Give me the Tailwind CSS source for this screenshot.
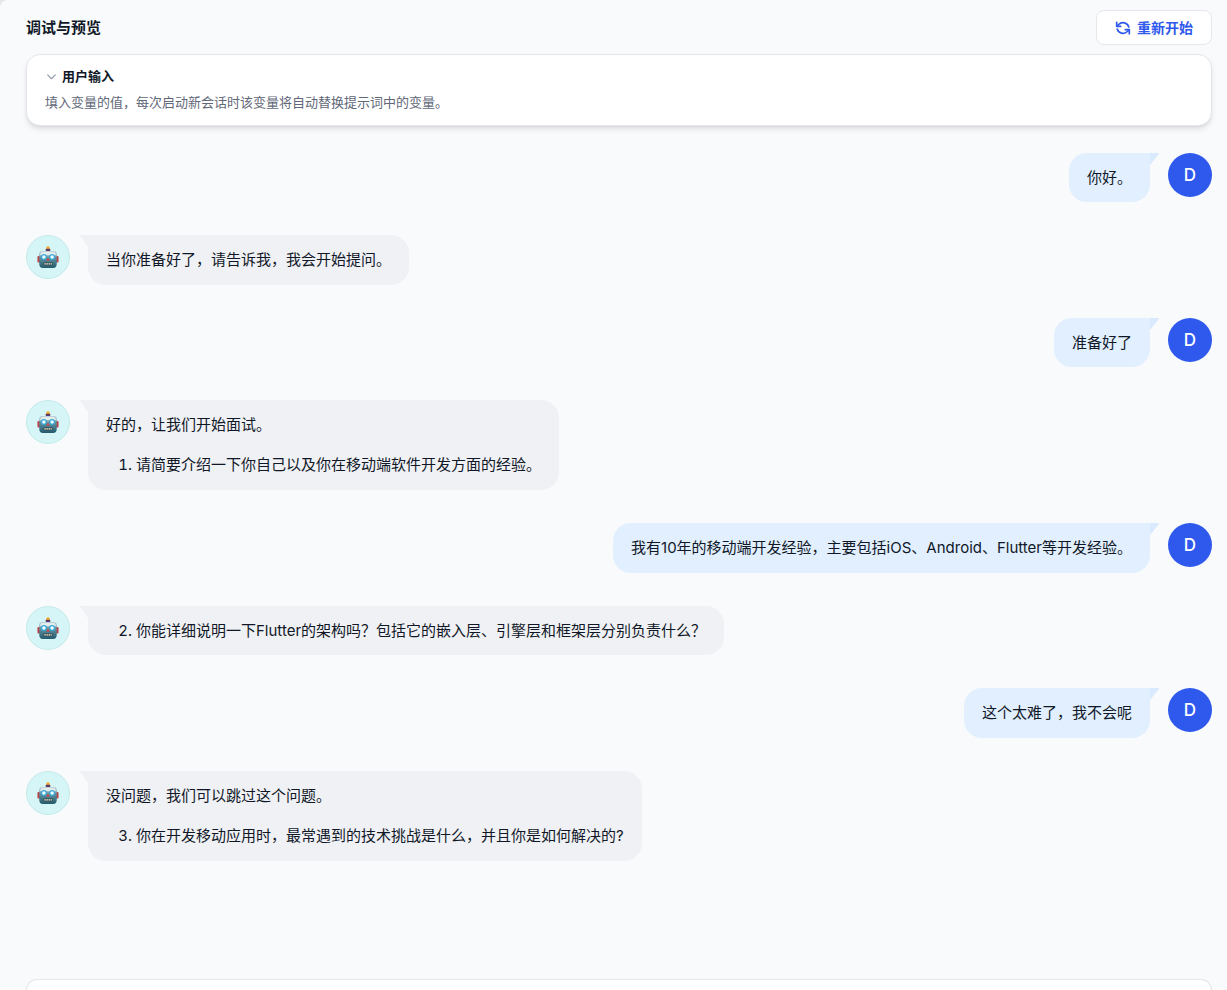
<!DOCTYPE html>
<html lang="zh-CN">

<head>
	<meta charset="UTF-8">
	<meta name="viewport" content="width=device-width, initial-scale=1.0">
	<title>调试与预览</title>
	<script src="https://cdn.jsdelivr.net/npm/@tailwindcss/browser@4"></script>
</head>

<body class="bg-gray-200 font-['Inter','Noto_Sans_CJK_SC',sans-serif] text-[#101828]">
	<!-- shared shapes -->
	<svg class="absolute size-0" aria-hidden="true">
		<defs>
			<linearGradient id="face" x1="0" y1="0" x2="0" y2="1">
				<stop offset="0" stop-color="#b9cdd3" />
				<stop offset=".45" stop-color="#5b8c9b" />
				<stop offset="1" stop-color="#235a6d" />
			</linearGradient>
		</defs>
		<symbol id="robot" viewBox="0 0 24 24">
			<rect x=".5" y="11" width="4" height="7" rx="1.2" fill="#b8434a" />
			<rect x="19.5" y="11" width="4" height="7" rx="1.2" fill="#b8434a" />
			<path d="M10 4V2.200a2 2 0 0 1 4 0V4z" fill="#f3ad2e" />
			<rect x="9.6" y="3" width="4.8" height="2.600" rx=".6" fill="#5b3b66" />
			<path d="M2.500 9A3.500 3.500 0 0 1 6 5.500h12A3.500 3.500 0 0 1 21.500 9v11a4 4 0 0 1-4 4h-11a4 4 0 0 1-4-4z" fill="url(#face)" />
			<path d="M3.500 10V9A3 3 0 0 1 6.500 6.200h11a3 3 0 0 1 3 2.800v1z" fill="#e3ecec" />
			<circle cx="7.500" cy="12" r="3.200" fill="#36a9d4" />
			<circle cx="16.500" cy="12" r="3.200" fill="#36a9d4" />
			<circle cx="7.500" cy="12" r="1.900" fill="#f2fdff" />
			<circle cx="16.500" cy="12" r="1.900" fill="#f2fdff" />
			<path d="M12 12.500l1.800 3.300h-3.600z" fill="#df3f3f" />
			<rect x="7" y="18" width="10" height="3" rx="1" fill="#27424d" />
			<path d="M8 18.500h1.500v2H8zM10.300 18.500h1.500v2h-1.500zM12.600 18.500h1.500v2h-1.500zM14.800 18.500h1.300v2h-1.300z" fill="#d8cfb4" />
		</symbol>
		<symbol id="tail" viewBox="0 0 8 12" preserveAspectRatio="none">
			<path d="M1 0h7v12L.3 1.300C-.1.700.3 0 1 0z" fill="currentColor" />
		</symbol>
	</svg>

	<main class="flex min-h-screen flex-col rounded-tl-lg bg-[#f8fafc] pr-[15px] pl-[26px]">
		<header class="flex items-center justify-between pt-[10px] pb-[9px]">
			<h1 class="text-[15px] font-semibold leading-6">调试与预览</h1>
			<button class="flex h-[35px] items-center gap-[6px] rounded-lg border border-gray-200 bg-white px-[18px] text-sm font-semibold text-[#2f59ec]">
				<svg class="size-4" viewBox="0 0 16 16" fill="none" stroke="currentColor" stroke-width="1.700" stroke-linecap="round" stroke-linejoin="round">
					<path d="M1.700 2.300v4h4M14.300 13.700v-4h-4" />
					<path d="M2 6.200l1.700-1.700A6 6 0 0 1 13.800 7M14 9.800l-1.700 1.700A6 6 0 0 1 2.200 9" />
				</svg>
				重新开始
			</button>
		</header>

		<section class="rounded-[14px] border border-gray-200 bg-white px-[18px] pt-[11px] pb-[13px] shadow-md">
			<h2>
				<button class="flex items-center gap-1 text-[13px] font-semibold leading-5">
					<svg class="size-[13px] text-gray-400" viewBox="0 0 12 12" fill="none" stroke="currentColor" stroke-width="1.200" stroke-linecap="round" stroke-linejoin="round">
						<path d="M2.500 4.500L6 8l3.500-3.500" />
					</svg>
					用户输入
				</button>
			</h2>
			<p class="mt-[6px] text-[13px] leading-5 text-[#5f6778]">填入变量的值，每次启动新会话时该变量将自动替换提示词中的变量。</p>
		</section>

		<div class="mt-[27px] flex flex-1 flex-col gap-[33px] text-[15px]">
			<div class="flex items-start justify-end gap-[18px]">
				<div class="relative rounded-[18px] rounded-tr-none bg-[#e1effe] px-[18px] py-[13px] leading-[23px]">
					<svg class="absolute top-0 left-full h-3 w-[9px] -scale-x-100 text-[#d9eafe]"><use href="#tail" /></svg>
					你好。
				</div>
				<div class="flex size-11 shrink-0 items-center justify-center rounded-full bg-[#2f59ec] pt-[2px] text-[17px] font-medium text-white">D</div>
			</div>

			<div class="flex items-start gap-[18px]">
				<div class="flex size-11 shrink-0 items-center justify-center rounded-full border border-[#c3ebe9] bg-[#d5f5f6]">
					<svg class="size-[22px]"><use href="#robot" /></svg>
				</div>
				<div class="relative rounded-[18px] rounded-tl-none bg-[#f0f1f5] px-[18px] py-[13px] leading-6">
					<svg class="absolute top-0 right-full h-3 w-2 text-[#f0f1f5]"><use href="#tail" /></svg>
					当你准备好了，请告诉我，我会开始提问。
				</div>
			</div>

			<div class="flex items-start justify-end gap-[18px]">
				<div class="relative rounded-[18px] rounded-tr-none bg-[#e1effe] px-[18px] py-[13px] leading-[23px]">
					<svg class="absolute top-0 left-full h-3 w-[9px] -scale-x-100 text-[#d9eafe]"><use href="#tail" /></svg>
					准备好了
				</div>
				<div class="flex size-11 shrink-0 items-center justify-center rounded-full bg-[#2f59ec] pt-[2px] text-[17px] font-medium text-white">D</div>
			</div>

			<div class="flex items-start gap-[18px]">
				<div class="flex size-11 shrink-0 items-center justify-center rounded-full border border-[#c3ebe9] bg-[#d5f5f6]">
					<svg class="size-[22px]"><use href="#robot" /></svg>
				</div>
				<div class="relative rounded-[18px] rounded-tl-none bg-[#f0f1f5] px-[18px] py-[13px] leading-6">
					<svg class="absolute top-0 right-full h-3 w-2 text-[#f0f1f5]"><use href="#tail" /></svg>
					<p class="mb-4">好的，让我们开始面试。</p>
					<ol class="list-decimal pl-[30px]">
						<li>请简要介绍一下你自己以及你在移动端软件开发方面的经验。</li>
					</ol>
				</div>
			</div>

			<div class="flex items-start justify-end gap-[18px]">
				<div class="relative rounded-[18px] rounded-tr-none bg-[#e1effe] px-[18px] py-[13px] leading-6">
					<svg class="absolute top-0 left-full h-3 w-[9px] -scale-x-100 text-[#d9eafe]"><use href="#tail" /></svg>
					我有10年的移动端开发经验，主要包括iOS、Android、Flutter等开发经验。
				</div>
				<div class="flex size-11 shrink-0 items-center justify-center rounded-full bg-[#2f59ec] pt-[2px] text-[17px] font-medium text-white">D</div>
			</div>

			<div class="flex items-start gap-[18px]">
				<div class="flex size-11 shrink-0 items-center justify-center rounded-full border border-[#c3ebe9] bg-[#d5f5f6]">
					<svg class="size-[22px]"><use href="#robot" /></svg>
				</div>
				<div class="relative rounded-[18px] rounded-tl-none bg-[#f0f1f5] px-[18px] py-[13px] leading-[23px]">
					<svg class="absolute top-0 right-full h-3 w-2 text-[#f0f1f5]"><use href="#tail" /></svg>
					<ol start="2" class="list-decimal pl-[30px]">
						<li>你能详细说明一下Flutter的架构吗？包括它的嵌入层、引擎层和框架层分别负责什么？</li>
					</ol>
				</div>
			</div>

			<div class="flex items-start justify-end gap-[18px]">
				<div class="relative rounded-[18px] rounded-tr-none bg-[#e1effe] px-[18px] py-[13px] leading-6">
					<svg class="absolute top-0 left-full h-3 w-[9px] -scale-x-100 text-[#d9eafe]"><use href="#tail" /></svg>
					这个太难了，我不会呢
				</div>
				<div class="flex size-11 shrink-0 items-center justify-center rounded-full bg-[#2f59ec] pt-[2px] text-[17px] font-medium text-white">D</div>
			</div>

			<div class="flex items-start gap-[18px]">
				<div class="flex size-11 shrink-0 items-center justify-center rounded-full border border-[#c3ebe9] bg-[#d5f5f6]">
					<svg class="size-[22px]"><use href="#robot" /></svg>
				</div>
				<div class="relative rounded-[18px] rounded-tl-none bg-[#f0f1f5] px-[18px] py-[13px] leading-6">
					<svg class="absolute top-0 right-full h-3 w-2 text-[#f0f1f5]"><use href="#tail" /></svg>
					<p class="mb-4">没问题，我们可以跳过这个问题。</p>
					<ol start="3" class="list-decimal pl-[30px]">
						<li>你在开发移动应用时，最常遇到的技术挑战是什么，并且你是如何解决的?</li>
					</ol>
				</div>
			</div>
		</div>

		<!-- top edge of the message composer -->
		<div class="h-[11px] rounded-t-xl border border-b-0 border-gray-200 bg-white"></div>
	</main>
</body>

</html>
